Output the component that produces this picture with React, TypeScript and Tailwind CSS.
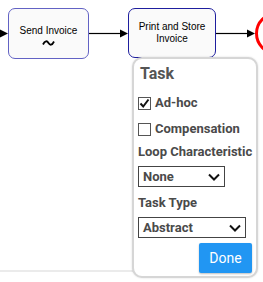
import React from "react";

function Chevron() {
  return (
    <svg width="12" height="8" viewBox="0 0 12 8" className="shrink-0">
      <path d="M1 1.5 L6 6.5 L11 1.5" fill="none" stroke="#111" strokeWidth="2" />
    </svg>
  );
}

function Check({ checked, label }: { checked: boolean; label: string }) {
  return (
    <div className="flex h-[26px] items-center gap-[4px]">
      <div className="relative h-[13px] w-[13px] border border-[#555] bg-white">
        {checked && (
          <svg width="13" height="13" viewBox="0 0 13 13" className="absolute -left-px -top-px">
            <path d="M2.5 6.5 L5.2 9.5 L10.5 2.5" fill="none" stroke="#111" strokeWidth="2" />
          </svg>
        )}
      </div>
      <span className="text-[13px] font-bold leading-[16px] text-[#4a4a4a]">{label}</span>
    </div>
  );
}

function Select({ value, width }: { value: string; width: string }) {
  return (
    <div className={`flex h-[21px] items-center justify-between border border-[#444] bg-white pl-[4px] pr-[4px] ${width}`}>
      <span className="text-[13px] font-bold leading-[16px] text-[#4a4a4a]">{value}</span>
      <Chevron />
    </div>
  );
}

export default function App() {
  return (
    <div className="relative h-[282px] w-[263px] overflow-hidden bg-white" style={{ fontFamily: "Roboto, 'Liberation Sans', sans-serif" }}>
      <svg className="absolute left-0 top-0" width="263" height="282">
        <line x1="0" y1="33.5" x2="3" y2="33.5" stroke="#000" strokeWidth="1.2" />
        <path d="M0 29.5 L8 33.5 L0 37.5 Z" fill="#000" />
        <line x1="89" y1="33.5" x2="121" y2="33.5" stroke="#000" strokeWidth="1.2" />
        <path d="M120 29.5 L128 33.5 L120 37.5 Z" fill="#000" />
        <line x1="216" y1="33.5" x2="248" y2="33.5" stroke="#000" strokeWidth="1.2" />
        <path d="M247 29.5 L255 33.5 L247 37.5 Z" fill="#000" />
        <circle cx="276.5" cy="33.5" r="20" fill="#fff" stroke="#ff0000" strokeWidth="3" />
        <line x1="0" y1="271" x2="134" y2="271" stroke="#e4e4e4" strokeWidth="1.5" />
      </svg>

      <div className="absolute left-[8px] top-[8px] flex h-[51px] w-[81px] flex-col items-center justify-center rounded-[7px] border-[1.5px] border-[#6262c4] bg-[#fafafa]">
        <span className="mt-[4px] text-[10px] leading-[12px] text-black" style={{ fontFamily: "'Liberation Sans', Arial, sans-serif" }}>
          Send Invoice
        </span>
        <svg width="13" height="8" viewBox="0 0 13 8" className="mt-[2px]">
          <path d="M1 5.5 C3 1.5 5 1.5 6.5 4 S10 6.5 12 2.5" fill="none" stroke="#000" strokeWidth="1.8" />
        </svg>
      </div>

      <div className="absolute left-[128px] top-[8px] flex h-[50px] w-[88px] flex-col items-center justify-center rounded-[7px] border-[1.5px] border-[#1e1e9e] bg-[#fafafa]">
        <span className="text-center text-[10px] leading-[12px] text-black" style={{ fontFamily: "'Liberation Sans', Arial, sans-serif" }}>
          Print and Store
          <br />
          Invoice
        </span>
      </div>

      <div className="absolute left-[132px] top-[57px] flex h-[221px] w-[126px] flex-col rounded-[10px] border-2 border-[#d6d6d6] bg-white px-[4px] pt-[5px] shadow-[0_0_2px_rgba(0,0,0,0.15)]">
        <div className="h-[20px] pl-[2px] text-[16px] font-bold leading-[20px] text-[#555]">Task</div>
        <div className="mt-[6px]">
          <Check checked label="Ad-hoc" />
          <Check checked={false} label="Compensation" />
        </div>
        <div className="mt-[2px] h-[16px] whitespace-nowrap text-[13px] font-bold leading-[16px] text-[#4a4a4a]">Loop Characteristic</div>
        <div className="mt-[6px]">
          <Select value="None" width="w-[87px]" />
        </div>
        <div className="mt-[8px] h-[16px] text-[13px] font-bold leading-[16px] text-[#4a4a4a]">Task Type</div>
        <div className="mt-[6px]">
          <Select value="Abstract" width="w-[108px]" />
        </div>
        <div className="mt-[5px] flex justify-end">
          <button className="h-[30px] w-[53px] rounded-[2px] bg-[#2196f3] text-[14px] leading-[30px] text-white shadow-[0_1px_2px_rgba(0,0,0,0.25)]">
            Done
          </button>
        </div>
      </div>
    </div>
  );
}
